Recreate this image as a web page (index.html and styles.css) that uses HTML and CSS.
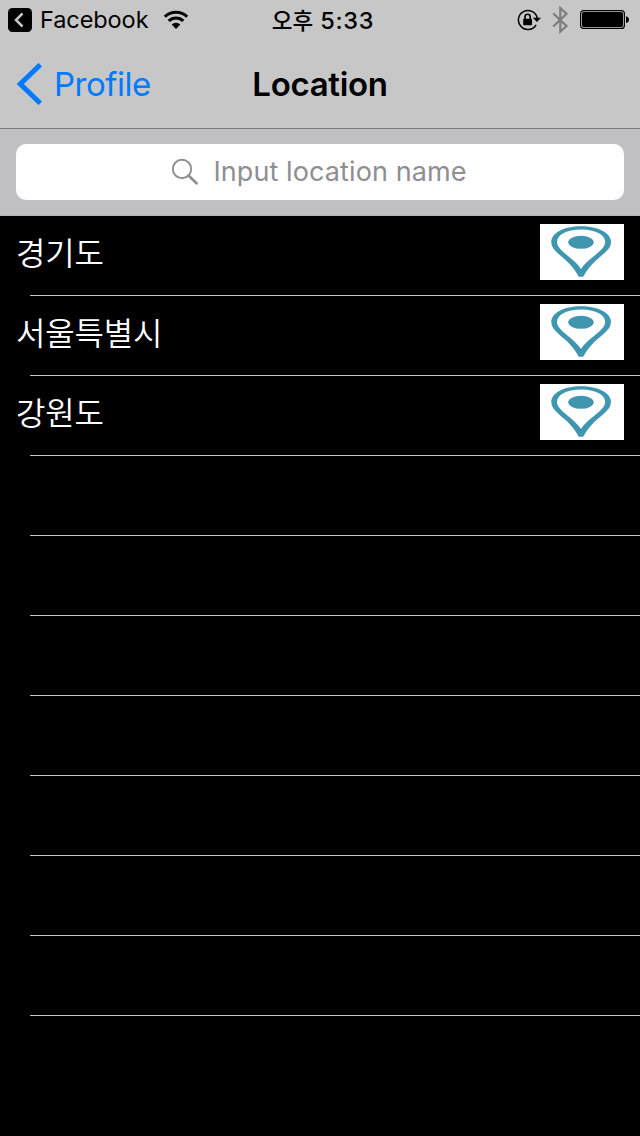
FILE: index.html
```
<!DOCTYPE html>
<html lang="ko">
<head>
<meta charset="utf-8">
<title>Location</title>
<link rel="stylesheet" href="styles.css">
</head>
<body>
<svg class="defs" width="0" height="0">
  <symbol id="pin" viewBox="0 0 84 56">
    <path fill-rule="evenodd" d="M41 2.300C24 2.300 11.300 9 11.300 18C11.300 27 23 32 30.500 41C34 45 37 49 38.700 52.800H43.300C45 49 48 45 51.500 41C59 32 71 27 71 18C71 9 58 2.300 41 2.300ZM41 5.500C55 5.500 65.200 10.500 65.200 18C65.200 26.500 48 34 41 45C34 34 17 26.500 17 18C17 10.500 27 5.500 41 5.500Z" fill="#3e96b0"/>
    <ellipse cx="41" cy="18.300" rx="12.700" ry="6.500" fill="#3e96b0"/>
  </symbol>
</svg>
<header class="top">
  <div class="status">
    <div class="status-left">
      <svg width="24" height="24" viewBox="0 0 24 24"><rect width="24" height="24" rx="4.500"/><path d="M14.500 5.500L8 12l6.500 6.500" fill="none" stroke="#c7c7c7" stroke-width="2.500"/></svg>
      <span class="carrier">Facebook</span>
      <svg class="wifi" width="26" height="20" viewBox="0 0 26 20"><g fill="none" stroke="#000" stroke-width="2.900"><path d="M1.800 6.800a16 16 0 0 1 22.400 0"/><path d="M5.700 10.900a10.500 10.500 0 0 1 14.600 0"/></g><path d="M8.700 14.600a6.200 6.200 0 0 1 8.600 0L13 19z"/></svg>
    </div>
    <span class="clock"><span class="meridiem">오후</span> 5:33</span>
    <div class="status-right">
      <svg width="24" height="22" viewBox="0 0 24 22"><path d="M19.100 15.800A9.500 9.500 0 1 1 20.200 9" fill="none" stroke="#000" stroke-width="1.500"/><path d="M15.800 8.800H24L20 13z"/><rect x="6.200" y="9.700" width="8.800" height="6.600" rx=".7"/><path d="M8 10V7.800a2.600 2.600 0 0 1 5.200 0V10" fill="none" stroke="#000" stroke-width="1.600"/></svg>
      <svg class="bluetooth" width="17" height="28" viewBox="0 0 17 28"><path d="M1.200 7.300L14.500 20 8.300 25.500V2L14.500 7.800 1.200 20.500" fill="none" stroke="#7d7d7d" stroke-width="2.200"/></svg>
      <svg class="battery" width="50" height="20" viewBox="0 0 50 20"><rect x=".6" y=".6" width="43.800" height="17.800" rx="3" fill="none" stroke="#000" stroke-width="1.200"/><rect x="2" y="2" width="41" height="15" rx="1.800"/><path d="M46 6.200c4 .5 4 6.300 0 6.800z"/></svg>
    </div>
  </div>
  <nav class="nav">
    <a class="back"><svg width="26" height="42" viewBox="0 0 26 42"><path d="M24.300 1.700L4.300 21l20 19.300" fill="none" stroke="#007aff" stroke-width="5"/></svg><span class="back-label">Profile</span></a>
    <h1 class="title">Location</h1>
  </nav>
</header>
<div class="search">
  <div class="field">
    <svg width="28" height="28" viewBox="0 0 28 28"><g fill="none" stroke="#8e8e93"><circle cx="11" cy="11" r="9.200" stroke-width="1.900"/><path d="M17.500 17.500l8 7.800" stroke-width="2.600" stroke-linecap="round"/></g></svg>
    <span class="placeholder">Input location name</span>
  </div>
</div>
<ul class="list">
  <li class="row"><span class="name">경기도</span><svg class="thumb"><use href="#pin"/></svg></li>
  <li class="row"><span class="name">서울특별시</span><svg class="thumb"><use href="#pin"/></svg></li>
  <li class="row"><span class="name">강원도</span><svg class="thumb"><use href="#pin"/></svg></li>
  <li class="row"></li>
  <li class="row"></li>
  <li class="row"></li>
  <li class="row"></li>
  <li class="row"></li>
  <li class="row"></li>
  <li class="row"></li>
</ul>
</body>
</html>
```
FILE: styles.css
```
* { box-sizing: border-box; }
body {
  margin: 0;
  min-height: 1136px;
  background: #000;
  color: #000;
  font-family: Inter, "Noto Sans CJK KR", sans-serif;
}
.defs { display: block; height: 0; }
svg { flex: none; }
.top {
  height: 129px;
  background: #c7c7c7;
  border-bottom: 1px solid #7a7a7d;
}
.status {
  height: 40px;
  display: grid;
  grid-template-columns: 1fr auto 1fr;
  align-items: center;
  padding-left: 8px;
  white-space: nowrap;
}
.status-left, .status-right { display: flex; align-items: center; }
.status-right { justify-content: flex-end; padding-right: 10px; }
.carrier { margin-left: 8px; width: 109px; font-size: 23.500px; line-height: 40px; letter-spacing: -0.080px; }
.wifi { margin-left: 14px; }
.clock { display: flex; gap: 7px; padding: 1px 2px 0 0; font-size: 23.500px; line-height: 39px; font-weight: 500; letter-spacing: 0.700px; }
.meridiem { font-size: 22.500px; line-height: 39px; letter-spacing: 0; }
.bluetooth { margin-left: 11px; }
.battery { margin-left: 11px; }
.nav {
  height: 88px;
  display: grid;
  grid-template-columns: 1fr auto 1fr;
  align-items: center;
  padding: 0 16px;
}
.back { display: flex; align-items: center; color: #007aff; }
.back-label { margin-left: 12px; font-size: 33px; line-height: 42px; letter-spacing: -0.500px; }
.title { margin: 0; font-size: 33px; line-height: 42px; font-weight: 600; letter-spacing: -0.300px; }
.search {
  height: 87px;
  padding: 15px 16px;
  background: #bfbfc4;
  border-bottom: 1px solid #b2b5b5;
}
.field {
  height: 56px;
  display: flex;
  align-items: center;
  justify-content: center;
  gap: 14px;
  padding-right: 2px;
  border-radius: 10px;
  background: #fff;
}
.placeholder { color: #8e8e93; font-size: 27px; line-height: 40px; letter-spacing: 0.100px; }
.list { margin: 0; padding: 0; list-style: none; }
.row {
  height: 80px;
  display: flex;
  justify-content: space-between;
  align-items: flex-start;
  padding: 8px 16px 0;
  background: linear-gradient(#c8c7cc, #c8c7cc) 30px 79px / 100% 1px no-repeat;
}
.name { color: #fff; font-size: 32px; line-height: 54px; font-weight: 350; font-family: "Noto Sans CJK KR", sans-serif; letter-spacing: -0.200px; }
.thumb { width: 84px; height: 56px; background: #fff; }
```
